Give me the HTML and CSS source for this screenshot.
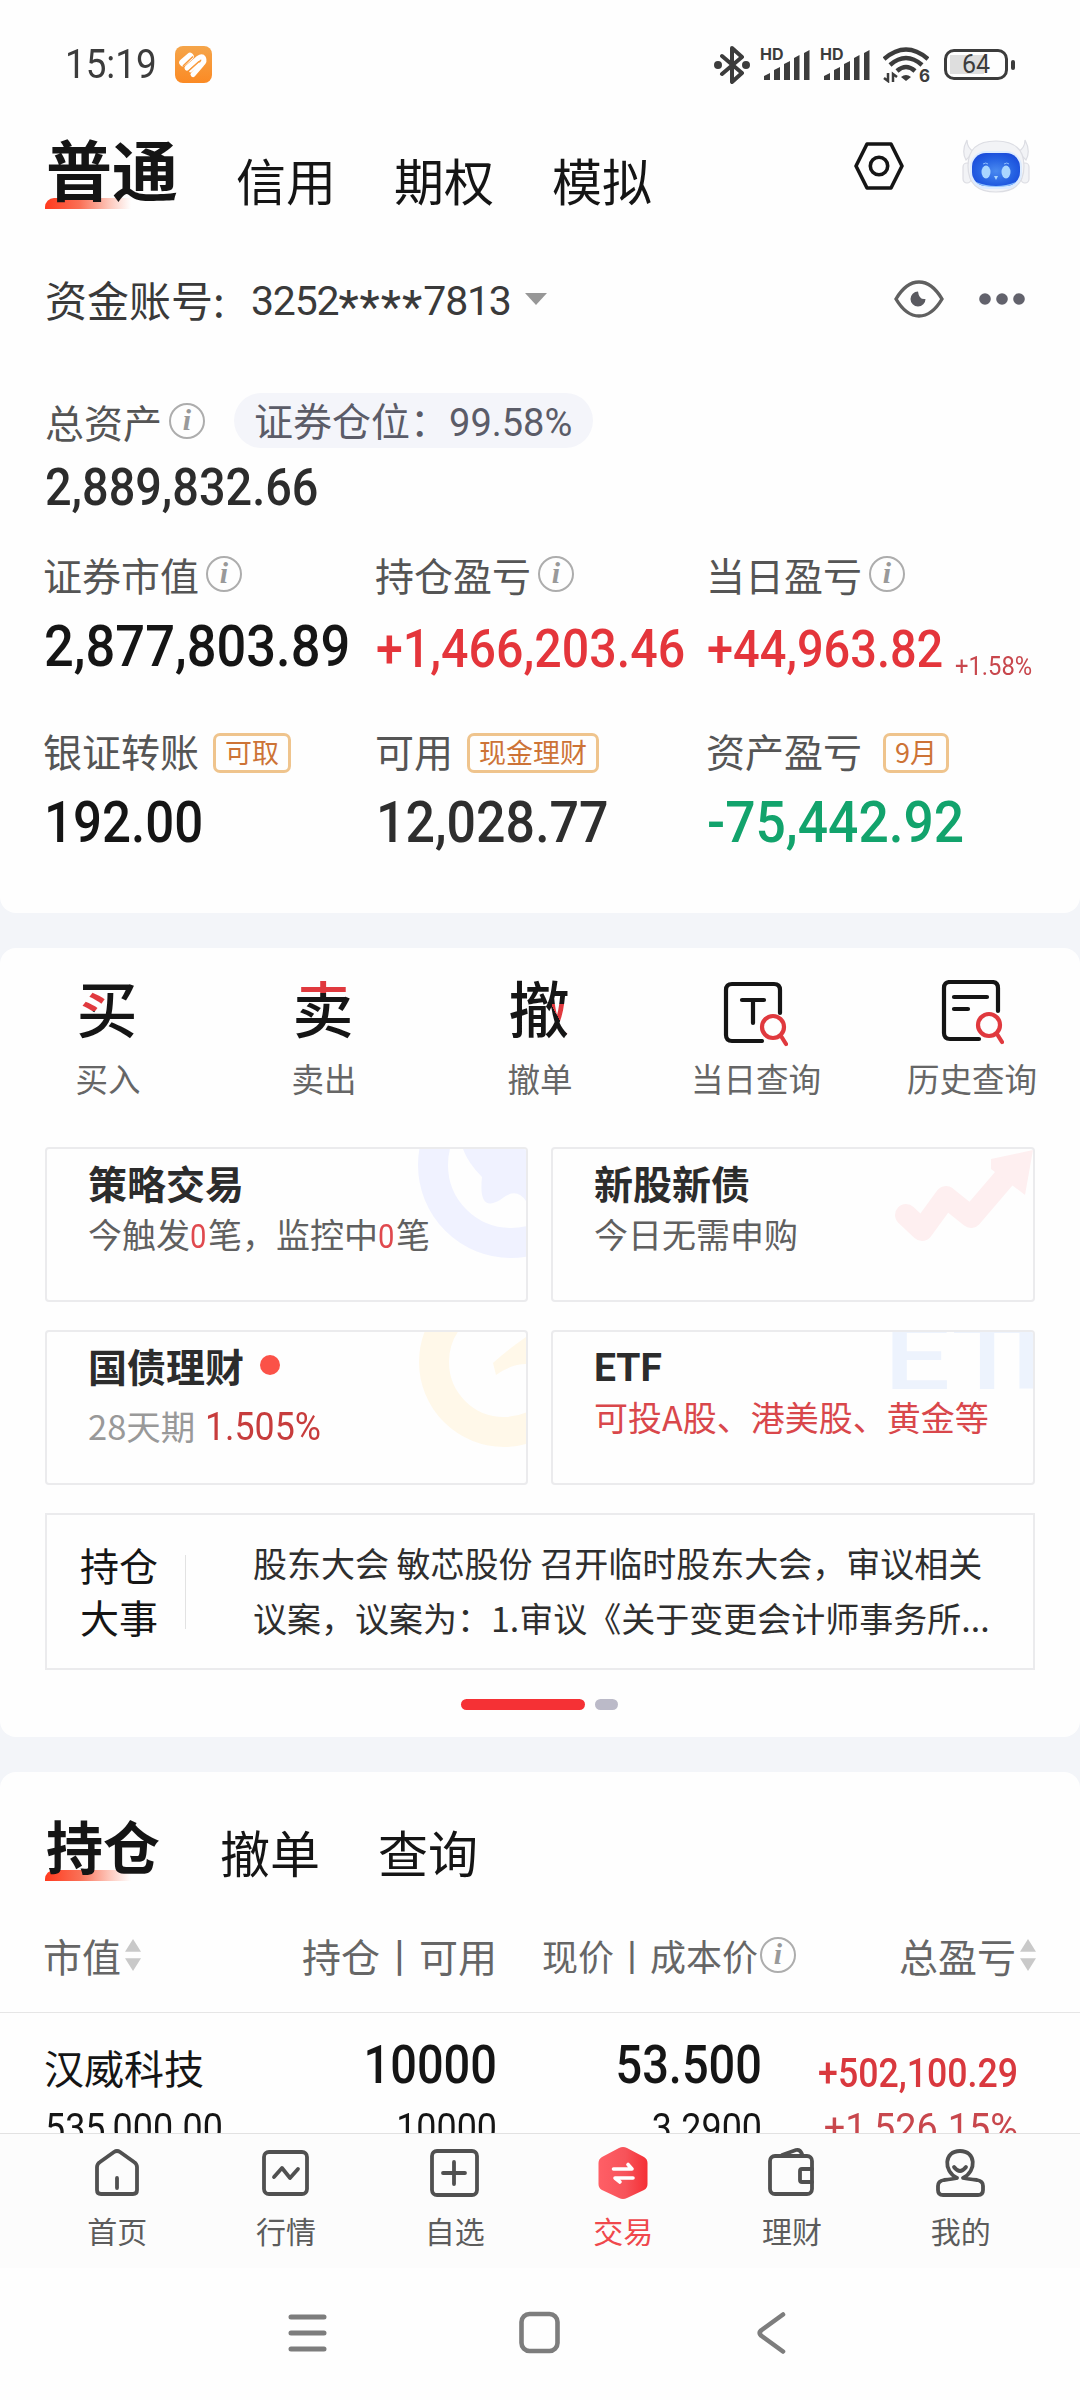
FILE: index.html
```html
<!DOCTYPE html>
<html lang="zh-CN">
<head>
<meta charset="utf-8">
<title>交易</title>
<link rel="stylesheet" href="styles.css">
</head>
<body>
<div class="app">
  <main class="scroll">
    <section class="card account">
      <div class="status">
        <span class="time num">15:19</span>
        <svg class="status-app" width="37" height="37" viewBox="0 0 37 37"><defs><linearGradient id="or" x1="0" y1="0" x2="0" y2="1"><stop offset="0" stop-color="#f5a54a"/><stop offset="1" stop-color="#fb8a24"/></linearGradient></defs><rect width="37" height="37" rx="8" fill="url(#or)"/><g fill="none" stroke="#fff" stroke-width="5" stroke-linecap="round"><path d="M8 16.500L15 10.500" stroke-width="7.500"/><path d="M12 22L23.500 12Q27 9.500 28.500 12Q30 15 27 18L18 28.500"/><path d="M15.500 25L23.500 17.500" stroke-width="3"/></g><path d="M8 20L18 10.500M13.500 25L24 15.500" stroke="#f9993a" stroke-width="1.500"/></svg>
        <div class="status-icons">
          <svg width="36" height="38" viewBox="0 0 36 38" fill="none" stroke="#3c3c3c" stroke-width="4" stroke-linejoin="round" stroke-linecap="round"><path d="M8 10L28 27L18 36V2L28 11L8 28"/><circle cx="4" cy="19" r="2" /><circle cx="32" cy="19" r="2"/></svg>
          <div class="signal"><span>HD</span><svg width="46" height="30" viewBox="0 0 46 30" fill="#3c3c3c"><path d="M0 30v-4l6-3v7zM10 30V20l6-3v13zM20 30V14l6-3v19zM30 30V8l5.500-3v25zM40 30V3l5.500-3v30z"/></svg></div>
          <div class="signal"><span>HD</span><svg width="46" height="30" viewBox="0 0 46 30" fill="#3c3c3c"><path d="M0 30v-4l6-3v7zM10 30V20l6-3v13zM20 30V14l6-3v19zM30 30V8l5.500-3v25zM40 30V3l5.500-3v30z"/></svg></div>
          <div class="wifi"><svg width="46" height="36" viewBox="0 0 46 36" fill="none" stroke="#3c3c3c" stroke-width="4.500"><path d="M1 12Q23-7 45 12M7 18Q23 4 39 18M14 24Q23 16 32 24"/><path d="M18 30Q23 26 28 30L23 34z" fill="#3c3c3c" stroke="none"/><path d="M5 26v8L1 31M10 35v-8l4 3" stroke-width="2.500"/></svg><span>6</span></div>
          <div class="battery"><span>64</span></div>
        </div>
      </div>

      <header class="top">
        <nav class="tabs tabs-main"><span class="on">普通</span><span>信用</span><span>期权</span><span>模拟</span></nav>
        <div class="tools">
          <svg width="50" height="48" viewBox="0 0 50 48" fill="none" stroke="#151515" stroke-width="3.600" stroke-linejoin="round"><path d="M13 2H37L48 24L37 46H13L2 24Z"/><circle cx="25" cy="24" r="8.700"/></svg>
          <svg width="68" height="54" viewBox="0 0 68 54"><defs><radialGradient id="face" cx=".5" cy=".55" r=".65"><stop offset="0" stop-color="#4a8af0"/><stop offset=".6" stop-color="#2460e2"/><stop offset="1" stop-color="#1746d8"/></radialGradient></defs><g fill="#f2f3f6" stroke="#dcdde3" stroke-width="1.200"><path d="M5 1Q-1 12 4 21L12 13Q5 9 5 1ZM63 1Q69 12 64 21L56 13Q63 9 63 1Z"/><rect x="1" y="24" width="8" height="20" rx="4"/><rect x="59" y="24" width="8" height="20" rx="4"/><path d="M34 2Q62 2 62 27Q62 53 34 53Q6 53 6 27Q6 2 34 2Z"/></g><rect x="8" y="12" width="52" height="38" rx="16" fill="#dcebff"/><rect x="10" y="14" width="48" height="33" rx="14" fill="url(#face)"/><path d="M14 43Q34 51 54 43Q50 48 34 48Q18 48 14 43" fill="#8fc3ff"/><ellipse cx="24" cy="33" rx="4.500" ry="6.500" fill="#a9d6ff"/><ellipse cx="44" cy="33" rx="4.500" ry="6.500" fill="#a9d6ff"/><path d="M32 37h4l-2 4z" fill="#a9d6ff"/><path d="M21 25q3-2 5 0M42 25q3-2 5 0" stroke="#8dbdff" fill="none"/></svg>
        </div>
      </header>

      <div class="acct">
        <span class="acct-label">资金账号:</span>
        <span class="acct-no">3252<i>****</i>7813</span>
        <i class="caret"></i>
        <svg class="eye" width="50" height="38" viewBox="0 0 50 38"><path d="M2 19Q12 2 25 2T48 19Q38 36 25 36T2 19Z" fill="none" stroke="#606060" stroke-width="3.400"/><path d="M24 11.500A7.500 7.500 0 1 0 31.500 19Q25 20 24 11.500Z" fill="#5a5a60"/></svg>
        <svg class="more" width="46" height="12" viewBox="0 0 46 12" fill="#62626c"><circle cx="6" cy="6" r="5.800"/><circle cx="23" cy="6" r="5.800"/><circle cx="40" cy="6" r="5.800"/></svg>
      </div>

      <div class="total-head"><span class="label">总资产</span><i class="info">i</i><span class="pill">证券仓位：<b>99.58%</b></span></div>
      <div class="total num">2,889,832.66</div>

      <div class="metrics">
        <div><p class="label">证券市值<i class="info">i</i></p><p class="val v57 num">2,877,803.89</p></div>
        <div><p class="label">持仓盈亏<i class="info">i</i></p><p class="val v54 num up">+1,466,203.46</p></div>
        <div><p class="label">当日盈亏<i class="info">i</i></p><p class="val v52 up"><span class="num">+44,963.82</span><small class="num">+1.58%</small></p></div>
        <div><p class="label">银证转账<em class="tag">可取</em></p><p class="val v58 num tight">192.00</p></div>
        <div><p class="label">可用<em class="tag">现金理财</em></p><p class="val v58 num soft">12,028.77</p></div>
        <div><p class="label">资产盈亏<em class="tag month">9月</em></p><p class="val v58 num down">-75,442.92</p></div>
      </div>
    </section>

    <section class="card trade">
      <div class="actions">
        <div><span class="glyph buy">买</span><p>买入</p></div>
        <div><span class="glyph sell">卖</span><p>卖出</p></div>
        <div><span class="glyph cancel">撤</span><p>撤单</p></div>
        <div><svg width="68" height="68" viewBox="0 0 68 68" fill="none" stroke="#151515" stroke-width="4.200" stroke-linecap="round"><path d="M42 61H12Q6 61 6 55V10Q6 4 12 4H54Q60 4 60 10V33"/><path d="M22 20H44M33 20V43"/><g stroke="#e0393e"><circle cx="53" cy="47" r="11"/><path d="M61 56L66 64"/></g></svg><p>当日查询</p></div>
        <div><svg width="68" height="68" viewBox="0 0 68 68" fill="none" stroke="#151515" stroke-width="4.200" stroke-linecap="round"><path d="M43 59H14Q8 59 8 53V8Q8 2 14 2H56Q62 2 62 8V31"/><path d="M18 17H51M18 29H32"/><g stroke="#e0393e"><circle cx="53" cy="45" r="11"/><path d="M61 54L66 62"/></g></svg><p>历史查询</p></div>
      </div>

      <div class="promos">
        <div class="promo"><svg class="mark" width="108" height="112" viewBox="0 0 108 112"><circle cx="93" cy="16" r="78" fill="none" stroke="#f0f2ff" stroke-width="30"/><path d="M45 0H108V52Q98 37 82 51Q60 64 64 28Q50 14 45 0Z" fill="#f0f2ff"/></svg><h3>策略交易</h3><p>今触发<b>0</b>笔，监控中<b>0</b>笔</p></div>
        <div class="promo"><svg class="mark" width="140" height="96" viewBox="0 0 140 96"><path d="M13 66L29 81L53 48L78 68L120 19" fill="none" stroke="#feeff0" stroke-width="22" stroke-linejoin="round" stroke-linecap="round"/><path d="M98 10L140 1L132 46L98 20Z" fill="#feeff0"/></svg><h3>新股新债</h3><p>今日无需申购</p></div>
        <div class="promo bond"><svg class="mark" width="108" height="117" viewBox="0 0 108 117"><circle cx="86" cy="30" r="70" fill="none" stroke="#fff8e9" stroke-width="30"/><path d="M75 31Q88 19 108 5V32Q93 32 78 43Z" fill="#fff8e9"/></svg><h3>国债理财<i class="dot"></i></h3><p>28天期 <b class="num">1.505%</b></p></div>
        <div class="promo etf"><span class="mark wm">E<i>T</i>F</span><h3>ETF</h3><p>可投A股、港美股、黄金等</p></div>
      </div>

      <div class="news">
        <div class="news-title">持仓<br>大事</div>
        <div class="news-body">股东大会 敏芯股份 召开临时股东大会，审议相关<br>议案，议案为：1.审议《关于变更会计师事务所...</div>
      </div>
      <div class="pager"><i class="cur"></i><i></i></div>
    </section>

    <section class="card positions">
      <nav class="tabs tabs-sub"><span class="on">持仓</span><span>撤单</span><span>查询</span></nav>
      <div class="cols head">
        <span>市值<i class="sort"></i></span><span>持仓丨可用</span><span class="price">现价丨成本价<i class="info">i</i></span><span class="pl">总盈亏<i class="sort"></i></span>
      </div>
      <div class="cols row">
        <span class="name">汉威科技</span><span class="num">10000</span><span class="num">53.500</span><span class="num gain">+502,100.29</span>
      </div>
      <div class="cols row2">
        <span class="num">535,000.00</span><span class="num">10000</span><span class="num">3.2900</span><span class="num gain">+1,526.15%</span>
      </div>
    </section>
  </main>

  <nav class="tabbar">
    <div><svg width="56" height="56" viewBox="0 0 56 56" fill="none" stroke="#505050" stroke-width="3.800" stroke-linecap="round" stroke-linejoin="round"><path d="M8 21Q8 18 11 16L25 6Q28 4 31 6L45 16Q48 18 48 21V44Q48 48 44 48H12Q8 48 8 44Z"/><path d="M28 32V42"/></svg><p>首页</p></div>
    <div><svg width="56" height="56" viewBox="0 0 56 56" fill="none" stroke="#505050" stroke-width="3.800" stroke-linecap="round" stroke-linejoin="round"><rect x="6" y="6" width="43" height="42" rx="5"/><path d="M16 31L24 22L32 32L40 23"/></svg><p>行情</p></div>
    <div><svg width="56" height="56" viewBox="0 0 56 56" fill="none" stroke="#505050" stroke-width="3.800" stroke-linecap="round" stroke-linejoin="round"><rect x="5" y="5" width="45" height="44" rx="5"/><path d="M16 27H38M27 16V38"/></svg><p>自选</p></div>
    <div class="active"><svg width="56" height="56" viewBox="0 0 56 56"><defs><linearGradient id="rd"><stop stop-color="#ff5f66"/><stop offset=".55" stop-color="#f7535a"/><stop offset="1" stop-color="#f52f35"/></linearGradient></defs><path d="M24 2Q28 0 32 2L49 11Q52.500 13 52.500 17V38Q52.500 42 49 44L32 52Q28 54 24 52L7 44Q3.500 42 3.500 38V17Q3.500 13 7 11Z" fill="url(#rd)"/><path d="M18.500 23H37L33 18.500M38 32H20L25 36" fill="none" stroke="#fff" stroke-width="3.600" stroke-linecap="round" stroke-linejoin="round"/></svg><p>交易</p></div>
    <div><svg width="56" height="56" viewBox="0 0 56 56" fill="none" stroke="#505050" stroke-width="3.800" stroke-linecap="round" stroke-linejoin="round"><rect x="6" y="10" width="42" height="38" rx="5"/><path d="M18 9L32 4Q36 3 38 8M48 23H38Q36 23 36 25V34Q36 36 38 36H48"/></svg><p>理财</p></div>
    <div><svg width="56" height="56" viewBox="0 0 56 56" fill="none" stroke="#505050" stroke-width="3.800" stroke-linecap="round" stroke-linejoin="round"><path d="M24 32C10 25 11 5 27 5C43 5 44 25 30 32Q35 33 44 34Q50 35 50 40V44Q50 49 45 49H10Q5 49 5 44V40Q5 35 11 34Q20 33 24 32"/><path d="M21 21Q27 29 33 21"/></svg><p>我的</p></div>
  </nav>
  <div class="sysnav">
    <svg width="46" height="46" viewBox="0 0 46 46" stroke="#7d7d7d" stroke-width="5" stroke-linecap="round"><path d="M6 7H39M6 23H39M6 39H39"/></svg>
    <svg width="46" height="46" viewBox="0 0 46 46" fill="none" stroke="#7d7d7d" stroke-width="4.600"><rect x="4.500" y="4" width="36" height="37" rx="8"/></svg>
    <svg width="46" height="46" viewBox="0 0 46 46" fill="none" stroke="#7d7d7d" stroke-width="4.600" stroke-linecap="round" stroke-linejoin="round"><path d="M34 4.500L12 20.500Q9.500 23 12 25.500L34 41.500"/></svg>
  </div>
</div>
</body>
</html>
```
FILE: styles.css
```css
* { box-sizing: border-box; }
body, p, h3 { margin: 0; }
body { background: #fefefe; }
i, em { font-style: normal; }
svg { display: block; flex: none; }

.app {
  width: 1080px;
  height: 2400px;
  display: flex;
  flex-direction: column;
  overflow: hidden;
  background: #fefefe;
  color: #151515;
  font-family: "Noto Sans CJK SC", sans-serif;
  white-space: nowrap;
}
.scroll {
  flex: 1;
  min-height: 0;
  overflow: hidden;
  display: flex;
  flex-direction: column;
  gap: 35px;
  background: #f3f5f9;
}
.card { background: #fefefe; border-radius: 16px; flex: none; }
.num {
  font-family: Roboto, sans-serif;
  display: inline-block;
  transform: scaleX(.92);
  transform-origin: left center;
}
.up { color: #e4353b; }
.down { color: #12a36c; }

/* status bar */
.account { height: 913px; border-radius: 0 0 16px 16px; }
.status { height: 92px; padding: 37px 65px 0 65px; display: flex; align-items: center; color: #3c3c3c; }
.time { width: 110px; font-size: 40px; line-height: 44px; transform: scaleX(.92); }
.status-icons { margin-left: auto; display: flex; align-items: center; }
.signal { position: relative; width: 50px; height: 32px; margin-left: 10px; padding: 1px 0 0 4px; }
.signal span { position: absolute; left: 0; top: -3px; font: 700 16px/16px Inter, sans-serif; }
.wifi { position: relative; width: 46px; height: 36px; margin-left: 13px; }
.wifi span { position: absolute; right: -1px; bottom: -2px; font: 700 17px/18px Inter, sans-serif; background: #fefefe; padding-left: 1px; }
.battery {
  position: relative; width: 64px; height: 31px; margin: 0 7px 0 15px;
  border: 3px solid #3c3c3c; border-radius: 10px; text-align: center;
  background: linear-gradient(90deg, #dedede 34px, transparent 34px) 3px 3px / 52px 19px no-repeat;
}
.battery span { font: 25px/25px Roboto, sans-serif; }
.battery::after { content: ""; position: absolute; right: -10px; top: 8px; width: 4px; height: 10px; border-radius: 2px; background: #3c3c3c; }

/* tabs */
.top { height: 114px; padding: 0 50px 0 45px; display: flex; align-items: flex-end; }
.tabs { display: flex; align-items: flex-end; gap: 58px; position: relative; z-index: 0; }
.tabs span { font-size: 50px; line-height: 54px; }
.tabs .on { position: relative; font-weight: 700; }
.tabs-main .on { font-size: 66px; line-height: 78px; padding-left: 1px; }
.tabs .on::before {
  content: ""; position: absolute; z-index: -1; left: 0; bottom: -3px; width: 86px; height: 11px;
  border-radius: 9px 0 0 0;
  background: linear-gradient(90deg, #ff3a1e, #fa6f55 40%, #fdc7bb 75%, #fefefe);
}
.tools { margin-left: auto; height: 54px; margin-bottom: 13px; display: flex; align-items: center; gap: 58px; }

/* account number */
.acct { height: 54px; margin-top: 66px; padding: 0 56px 0 45px; display: flex; align-items: center; color: #3a3a3a; }
.acct-label { width: 206px; font-size: 42px; line-height: 54px; }
.acct-no { width: 274px; height: 54px; font: 41px/58px Roboto, sans-serif; letter-spacing: -1.2px; }
.acct-no i { position: relative; top: 8px; font-size: 47px; line-height: 50px; letter-spacing: 1px; }
.caret { border: 11px solid transparent; border-top: 12px solid #979797; border-bottom: 0; }
.eye { margin-left: auto; }
.more { margin-left: 35px; margin-right: -1px; }

/* assets */
.label { margin-left: -1px; font-size: 39px; line-height: 50px; height: 50px; color: #555; display: flex; align-items: center; }
.info {
  flex: none; width: 36px; height: 36px; margin: 0 0 0 7px;
  border: 2px solid #adadad; border-radius: 50%;
  font: italic 700 30px/30px "Liberation Serif", serif; color: #999; text-align: center;
}
.total-head { margin-top: 67px; height: 55px; padding-left: 45px; display: flex; align-items: center; }
.total-head .label { height: 54px; margin-left: 0; }
.pill {
  width: 359px; height: 55px; margin-left: 29px; padding-left: 20px; border-radius: 28px; background: #f4f5fa;
  color: #5b5c68; font-size: 39px; line-height: 53px; display: flex;
}
.pill b { font: 400 38px/60px Roboto, sans-serif; }
.total { display: block; margin: 8px 0 0 45px; width: 340px; height: 61px; font-size: 52px; line-height: 63px; font-weight: 500; color: #2c2c2c; transform: scaleX(.9); }
.metrics { margin-top: 32px; padding-left: 44px; display: grid; grid-template-columns: 332px 331px 1fr; row-gap: 50px; }
.val { display: block; height: 60px; margin-top: 16px; line-height: 60px; font-weight: 500; }
.v57 { font-size: 57px; line-height: 63px; }
.v54 { font-size: 54px; line-height: 67px; transform: scaleX(.895); }
.v52 { font-size: 51px; line-height: 70px; display: flex; }
.v52 .num { width: 248px; }
.v52 small { font-size: 25px; font-weight: 400; line-height: 104px; height: 60px; color: #c8474d; transform: scaleX(.95); }
.v58 { font-size: 58px; line-height: 62px; transform: scaleX(.92); }
.tight { transform: scaleX(.88); }
.soft { color: #2e2e2e; transform: scaleX(.895); }
.tag {
  height: 40px; margin: 5px 0 0 14px; padding: 0 9px; border: 3px solid #efc48d; border-radius: 7px;
  font-size: 27px; line-height: 32px; color: #cd7336;
}
.month { margin-left: 21px; }

/* trade shortcuts */
.trade { height: 789px; padding-top: 30px; }
.actions { display: grid; grid-template-columns: repeat(5, 1fr); justify-items: center; }
.actions > div { height: 120px; display: flex; flex-direction: column; align-items: center; justify-content: space-between; }
.actions p { font-size: 32.5px; line-height: 40px; color: #666; }
.actions svg { margin: 2px 3px 0 0; }
.glyph { margin: -2px 2px 0 0; font-size: 61px; line-height: 62px; height: 70px; font-weight: 500; color: transparent; background-color: #151515; background-repeat: no-repeat; -webkit-background-clip: text; background-clip: text; }
.buy { background-image: linear-gradient(#e0393e, #e0393e); background-size: 26px 20px; background-position: 3px 15px; }
.sell { background-image: linear-gradient(#e0393e, #e0393e); background-size: 60px 17px; background-position: 0 0; }
.cancel { background-image: linear-gradient(62deg, transparent 50%, #e0393e 50%); background-size: 17px 36px; background-position: 44px 28px; }

.promos { margin-top: 49px; padding: 0 45px; display: grid; grid-template-columns: 483px 484px; grid-auto-rows: 155px; gap: 28px 23px; }
.promo { position: relative; overflow: hidden; border: 2px solid #ebebed; border-radius: 4px; padding: 13px 0 0 41px; }
.promo h3 { position: relative; font-size: 39px; line-height: 40px; font-weight: 700; color: #2c2c2c; display: flex; align-items: center; }
.promo p { position: relative; margin-top: 12px; font-size: 34px; line-height: 40px; color: #606060; }
.promo p b { font-weight: 400; color: #e0494e; font-family: Roboto, sans-serif; display: inline-block; width: 18px; transform: scaleX(.86); transform-origin: left; }
.mark { position: absolute; right: 0; top: 0; }
.bond p { margin-top: 20px; color: #999; font-size: 34.5px; }
.promo.bond .num { margin-left: 2px; color: #c73c3c; font-size: 38px; transform: scaleX(.94); }
.dot { width: 20px; height: 20px; margin-left: 16px; border-radius: 50%; background: #fb5248; }
.etf h3 { font-family: Roboto, sans-serif; line-height: 47px; height: 40px; padding-top: 6px; }
.etf p { color: #d9474b; }
.wm { left: 331px; right: auto; top: -3px; font: 500 90px/60px Roboto, sans-serif; letter-spacing: 1px; color: #edf3fd; transform: scaleX(1.3); transform-origin: left; }
.wm i { letter-spacing: -9px; }

.news { margin: 28px 45px 0; height: 157px; border: 2px solid #ebebed; display: flex; align-items: center; padding-left: 33px; }
.news-title { width: 106px; font-size: 39px; line-height: 52px; margin-top: -4px; position: relative; }
.news-title::after { content: ""; position: absolute; right: 0; top: 17px; width: 1px; height: 74px; background: #e2e2e2; }
.news-body { margin: -3px 0 0 67px; font-size: 34px; line-height: 55px; color: #2e2e2e; }
.pager { margin-top: 29px; padding-right: 2px; display: flex; justify-content: center; gap: 10px; }
.pager i { width: 23px; height: 11px; border-radius: 6px; background: #bbbac8; }
.pager .cur { width: 124px; background: #f53135; }

/* holdings */
.positions { padding-top: 40px; }
.tabs-sub { padding-left: 45px; height: 66px; }
.tabs-sub .on { font-size: 57px; line-height: 68px; padding: 0 2px 0 1px; }
.cols { display: grid; grid-template-columns: 225px 227px 265px 256px; padding-left: 45px; align-items: start; }
.cols > * { text-align: right; transform-origin: right center; }
.cols > :first-child { text-align: left; transform-origin: left center; }
.head { margin-top: 52px; height: 83px; padding-bottom: 33px; border-bottom: 1px solid #e6e6e6; font-size: 39px; line-height: 50px; color: #666; }
.head span { display: flex; align-items: center; justify-content: flex-end; }
.head span:first-child { justify-content: flex-start; margin-left: -2px; }
.head .price { font-size: 36px; margin-right: -34px; }
.head .price .info { margin-left: 2px; }
.head .pl { margin-right: -18px; }
.sort { width: 16px; height: 32px; margin: 0 0 0 4px; background: #c9c9c9; clip-path: polygon(50% 0, 100% 40%, 0 40%, 0 60%, 100% 60%, 50% 100%, 0 60%, 0 40%); }
.row { margin-top: 22px; height: 60px; line-height: 60px; font-size: 54px; font-weight: 500; }
.row .num { transform: scaleX(.87); }
.row .name { font-size: 40px; font-weight: 400; line-height: 65px; margin-left: -1px; }
.row .num.gain { font-size: 41px; line-height: 76px; color: #d9383e; transform: scaleX(.87); }
.row2 { margin-top: 8px; height: 50px; line-height: 50px; font-size: 39px; }
.row2 .num { transform: scaleX(.92); }
.row2 .num.gain { color: #c8474d; transform: scaleX(.97); }

/* bottom bars */
.tabbar { flex: none; height: 135px; padding: 12px 35px 0 33px; border-top: 1px solid #e2e2e2; background: #fcfcfc; display: grid; grid-template-columns: repeat(6, 1fr); }
.tabbar div { display: flex; flex-direction: column; align-items: center; }
.tabbar p { margin-top: 8px; font-size: 30px; line-height: 40px; color: #5c5c5c; }
.tabbar .active p { color: #f0484c; }
.sysnav { flex: none; height: 132px; padding: 42px 285px 0; display: flex; justify-content: space-between; }
```
